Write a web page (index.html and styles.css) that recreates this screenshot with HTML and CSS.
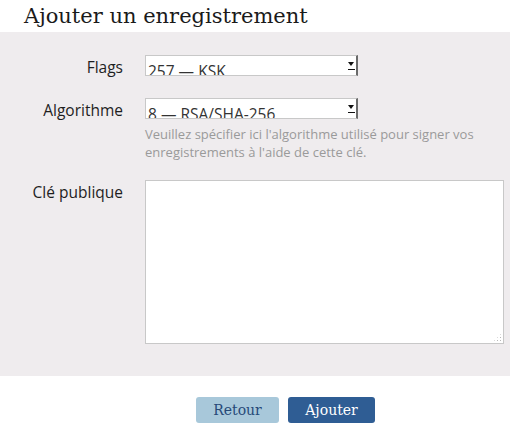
FILE: index.html
```html
<!DOCTYPE html>
<html lang="fr">
<head>
<meta charset="utf-8">
<title>Ajouter un enregistrement</title>
<link rel="stylesheet" href="styles.css">
</head>
<body>
<h1 class="title">Ajouter un enregistrement</h1>
<form class="panel">
  <div class="row">
    <label class="label">Flags</label>
    <div class="field">
      <div class="select">
        <span class="select-text">257 — KSK</span>
        <span class="arrow"></span>
      </div>
    </div>
  </div>
  <div class="row row-help">
    <label class="label">Algorithme</label>
    <div class="field">
      <div class="select">
        <span class="select-text">8 — RSA/SHA-256</span>
        <span class="arrow"></span>
      </div>
      <p class="help">Veuillez spécifier ici l'algorithme utilisé pour signer vos enregistrements à l'aide de cette clé.</p>
    </div>
  </div>
  <div class="row">
    <label class="label">Clé publique</label>
    <div class="field">
      <div class="textarea-wrap">
        <textarea class="textarea"></textarea>
        <span class="grip"></span>
      </div>
    </div>
  </div>
</form>
<div class="actions">
  <button type="button" class="btn btn-back">Retour</button>
  <button type="button" class="btn btn-add">Ajouter</button>
</div>
</body>
</html>
```
FILE: styles.css
```css
html, body {
  margin: 0;
  padding: 0;
  background: #ffffff;
}
body {
  font-family: "Open Sans", "DejaVu Sans", sans-serif;
  color: #222;
}
.title {
  margin: 0;
  padding: 4px 0 0 24px;
  height: 28px;
  font-family: "DejaVu Serif", serif;
  font-weight: normal;
  font-size: 21px;
  line-height: 25px;
  color: #1a1a1a;
  white-space: nowrap;
}
.panel {
  background: #efecee;
  padding: 23px 6px 32px 0;
}
.row {
  display: grid;
  grid-template-columns: 123px 1fr;
  column-gap: 22px;
  margin-bottom: 22px;
}
.row-help { margin-bottom: 19px; }
.row:last-child { margin-bottom: 0; }
.label {
  text-align: right;
  font-size: 15.5px;
  line-height: 18px;
  padding-top: 3px;
  color: #1e1e1e;
}
.field {
  display: flex;
  flex-direction: column;
}
.select {
  position: relative;
  width: 213px;
  height: 21px;
  box-sizing: border-box;
  background: #fff;
  border: 1px solid #c8c8c8;
  border-right: 2px solid #6a6a6a;
  overflow: hidden;
}
.select-text {
  display: block;
  padding: 5px 0 0 2px;
  font-size: 15.5px;
  line-height: 20px;
  color: #333;
  white-space: nowrap;
}
.arrow {
  position: absolute;
  right: 2px;
  top: 6px;
  width: 0;
  height: 0;
  border-left: 3.5px solid transparent;
  border-right: 3.5px solid transparent;
  border-top: 4px solid #111;
}
.arrow::after {
  content: "";
  position: absolute;
  left: -3.5px;
  top: 3px;
  width: 7px;
  height: 1px;
  background: #111;
}
.help {
  margin: 6px 0 0 0;
  font-size: 13px;
  line-height: 18px;
  color: #9a9a9a;
  max-width: 340px;
}
.textarea-wrap {
  position: relative;
  width: 359px;
  height: 164px;
}
.textarea {
  display: block;
  width: 359px;
  height: 164px;
  box-sizing: border-box;
  border: 1px solid #c8c8c8;
  background: #fff;
  margin: 0;
  resize: none;
}
.grip {
  position: absolute;
  right: 2px;
  bottom: 2px;
  width: 9px;
  height: 9px;
  background-image: radial-gradient(circle, #b8b8b8 0.8px, transparent 1px);
  background-size: 3px 3px;
  clip-path: polygon(100% 0, 100% 100%, 0 100%);
}
.actions {
  display: flex;
  justify-content: flex-start;
  gap: 9px;
  padding: 21px 0 0 196px;
}
.btn {
  font-family: "DejaVu Serif", serif;
  font-size: 14px;
  height: 26px;
  border: none;
  border-radius: 3px;
  padding: 0;
  cursor: pointer;
}
.btn-back {
  background: #a8c8da;
  color: #264a78;
  width: 83px;
}
.btn-add {
  background: #2f5d94;
  color: #fff;
  width: 87px;
}
```
